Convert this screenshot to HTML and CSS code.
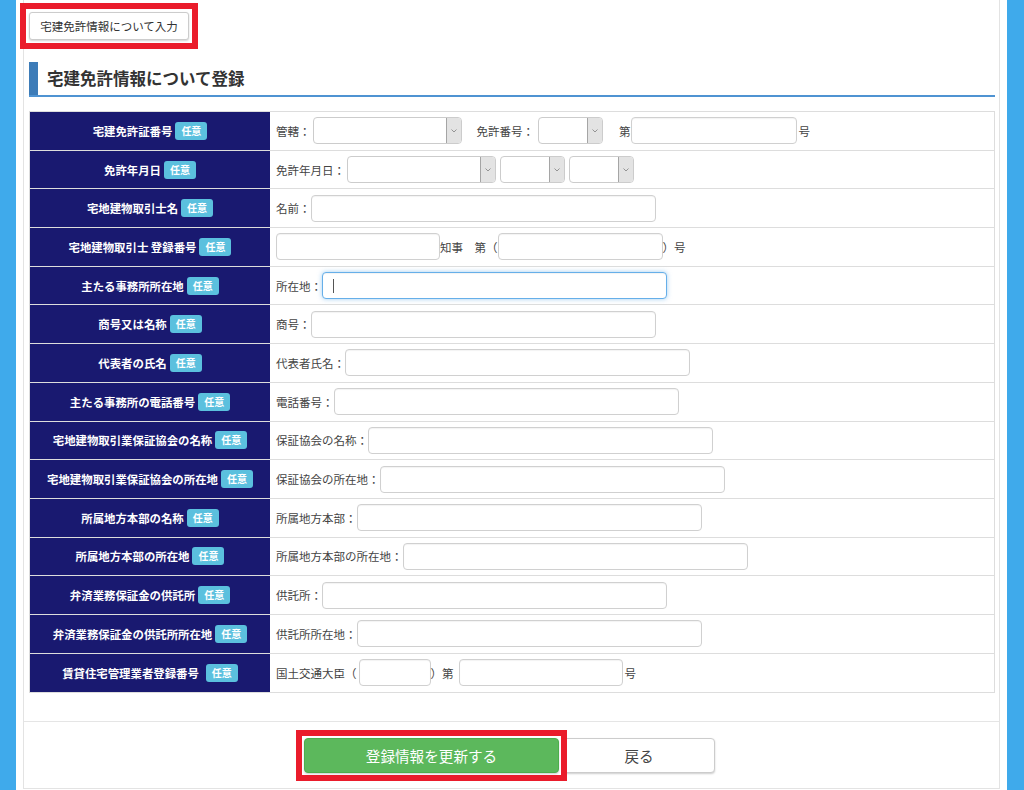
FILE: index.html
```html
<!DOCTYPE html>
<html lang="ja">
<head>
<meta charset="utf-8">
<title>宅建免許情報について登録</title>
<link rel="stylesheet" href="styles.css">
</head>
<body>
<div class="page">
  <div class="panel">
    <div class="panel-body">
      <div class="mark mark-top"><button class="top-btn">宅建免許情報について入力</button></div>
      <h2 class="heading"><span class="heading-text">宅建免許情報について登録</span></h2>

      <div class="form-table">
        <div class="row">
          <div class="label">宅建免許証番号<span class="badge">任意</span></div>
          <div class="value">管轄：<div class="select sel-lg ml2"><span class="arrow"><svg width="6" height="4" viewBox="0 0 6 4"><path d="M0.5 0.5 L3 3 L5.5 0.5" fill="none" stroke="#8a8a8a" stroke-width="0.9"/></svg></span></div><span class="ml15">免許番号：</span><div class="select sel-sm ml4"><span class="arrow"><svg width="6" height="4" viewBox="0 0 6 4"><path d="M0.5 0.5 L3 3 L5.5 0.5" fill="none" stroke="#8a8a8a" stroke-width="0.9"/></svg></span></div><span class="ml16">第</span><input class="inp w166" type="text"><span class="ml2">号</span></div>
        </div>
        <div class="row">
          <div class="label">免許年月日<span class="badge">任意</span></div>
          <div class="value">免許年月日：<div class="select sel-lg ml2"><span class="arrow"><svg width="6" height="4" viewBox="0 0 6 4"><path d="M0.5 0.5 L3 3 L5.5 0.5" fill="none" stroke="#8a8a8a" stroke-width="0.9"/></svg></span></div><div class="select sel-sm ml4"><span class="arrow"><svg width="6" height="4" viewBox="0 0 6 4"><path d="M0.5 0.5 L3 3 L5.5 0.5" fill="none" stroke="#8a8a8a" stroke-width="0.9"/></svg></span></div><div class="select sel-sm ml4"><span class="arrow"><svg width="6" height="4" viewBox="0 0 6 4"><path d="M0.5 0.5 L3 3 L5.5 0.5" fill="none" stroke="#8a8a8a" stroke-width="0.9"/></svg></span></div></div>
        </div>
        <div class="row">
          <div class="label">宅地建物取引士名<span class="badge">任意</span></div>
          <div class="value">名前：<input class="inp" type="text"></div>
        </div>
        <div class="row">
          <div class="label">宅地建物取引士 登録番号<span class="badge">任意</span></div>
          <div class="value"><input class="inp w164" type="text">知事　第（<input class="inp w165" type="text">）号</div>
        </div>
        <div class="row">
          <div class="label">主たる事務所所在地<span class="badge">任意</span></div>
          <div class="value">所在地：<div class="inp focus"><span class="caret"></span></div></div>
        </div>
        <div class="row">
          <div class="label">商号又は名称<span class="badge">任意</span></div>
          <div class="value">商号：<input class="inp" type="text"></div>
        </div>
        <div class="row">
          <div class="label">代表者の氏名<span class="badge">任意</span></div>
          <div class="value">代表者氏名：<input class="inp" type="text"></div>
        </div>
        <div class="row">
          <div class="label">主たる事務所の電話番号<span class="badge">任意</span></div>
          <div class="value">電話番号：<input class="inp" type="text"></div>
        </div>
        <div class="row">
          <div class="label">宅地建物取引業保証協会の名称<span class="badge">任意</span></div>
          <div class="value">保証協会の名称：<input class="inp" type="text"></div>
        </div>
        <div class="row">
          <div class="label">宅地建物取引業保証協会の所在地<span class="badge">任意</span></div>
          <div class="value">保証協会の所在地：<input class="inp" type="text"></div>
        </div>
        <div class="row">
          <div class="label">所属地方本部の名称<span class="badge">任意</span></div>
          <div class="value">所属地方本部：<input class="inp" type="text"></div>
        </div>
        <div class="row">
          <div class="label">所属地方本部の所在地<span class="badge">任意</span></div>
          <div class="value">所属地方本部の所在地：<input class="inp" type="text"></div>
        </div>
        <div class="row">
          <div class="label">弁済業務保証金の供託所<span class="badge">任意</span></div>
          <div class="value">供託所：<input class="inp" type="text"></div>
        </div>
        <div class="row">
          <div class="label">弁済業務保証金の供託所所在地<span class="badge">任意</span></div>
          <div class="value">供託所所在地：<input class="inp" type="text"></div>
        </div>
        <div class="row">
          <div class="label">賃貸住宅管理業者登録番号<span class="badge badge-wide">任意</span></div>
          <div class="value">国土交通大臣（<input class="inp w72 ml2" type="text">）第<input class="inp w164 ml5" type="text"><span class="ml2">号</span></div>
        </div>
      </div>
    </div>
    <div class="panel-footer">
      <div class="mark mark-submit"><button class="btn-submit">登録情報を更新する</button></div>
      <button class="btn-back">戻る</button>
    </div>
  </div>
</div>
</body>
</html>
```

FILE: styles.css
```css
html, body {
  margin: 0;
  padding: 0;
}
body {
  background: #3faaeb;
  font-family: "Noto Sans CJK JP", "Noto Sans", "Liberation Sans", sans-serif;
  color: #444;
  font-size: 11.5px;
}
.page {
  margin: 0 17px 0 16px;
  background: #fff;
  height: 790px;
  overflow: hidden;
}
.panel {
  margin: 0 7px;
  border-left: 1px solid #e3e3e3;
  border-right: 1px solid #e3e3e3;
  border-bottom: 1px solid #e3e3e3;
}
.panel-body {
  padding: 12px 4px 28px 5px;
}
.mark {
  border: 6px solid #ea1c2b;
  position: relative;
  z-index: 1;
}
.mark-top {
  width: fit-content;
  padding: 3px;
  margin: -9px;
}
.mark-submit {
  display: flex;
  padding: 2px;
  margin: -8px;
}
.top-btn {
  display: block;
  width: 160px;
  height: 28px;
  padding: 0;
  background: #fff;
  border: 1px solid #ccc;
  border-radius: 3px;
  box-shadow: 0 1px 2px rgba(0,0,0,0.18);
  font-family: inherit;
  font-size: 11.5px;
  color: #333;
  line-height: 26px;
}
.heading {
  margin: 22px 0 0 0;
  border-bottom: 2px solid #4f93d2;
  font-size: 16.5px;
  font-weight: bold;
  color: #333;
  line-height: 33px;
  height: 33px;
}
.heading-text {
  display: block;
  height: 33px;
  border-left: 9px solid #3d7cb8;
  padding-left: 9px;
}
.form-table {
  margin-top: 14px;
  border: 1px solid #ddd;
}
.row {
  display: flex;
  height: 38.7px;
  box-sizing: border-box;
  border-bottom: 1px solid #ddd;
}
.row:last-child {
  border-bottom: none;
}
.label {
  width: 240px;
  flex: none;
  background: #191970;
  color: #fff;
  font-weight: bold;
  font-size: 11.4px;
  display: flex;
  align-items: center;
  justify-content: center;
  gap: 3px;
  white-space: nowrap;
}
.badge {
  display: inline-block;
  height: 18px;
  line-height: 18px;
  padding: 0 6px;
  background: #5bc0de;
  border-radius: 3px;
  font-size: 10px;
  font-weight: bold;
  color: #fff;
}
.badge-wide {
  margin-left: 4px;
}
.value {
  flex: 1;
  display: flex;
  align-items: center;
  padding-left: 6px;
  white-space: nowrap;
}
.inp {
  box-sizing: border-box;
  width: 345px;
  height: 27px;
  margin: 0;
  padding: 0 10px;
  border: 1px solid #d0d0d0;
  border-radius: 4px;
  background: #fff;
  box-shadow: inset 0 1px 1px rgba(0,0,0,0.05);
  font-family: inherit;
  font-size: 11.5px;
  outline: none;
}
.inp.focus {
  display: flex;
  align-items: center;
  border-color: #66afe9;
  box-shadow: inset 0 1px 1px rgba(0,0,0,0.05), 0 0 5px rgba(102,175,233,0.6);
}
.caret {
  display: block;
  width: 1px;
  height: 14px;
  background: #555;
}
.w166 { width: 166px; }
.w165 { width: 165px; }
.w164 { width: 164px; }
.w72 { width: 72px; }
.ml2 { margin-left: 2px; }
.ml4 { margin-left: 4px; }
.ml5 { margin-left: 5px; }
.ml15 { margin-left: 15px; }
.ml16 { margin-left: 16px; }
.select {
  box-sizing: border-box;
  height: 27px;
  display: flex;
  justify-content: flex-end;
  border: 1px solid #ccc;
  border-radius: 4px;
  background: #fff;
}
.sel-lg { width: 149px; }
.sel-sm { width: 65px; }
.arrow {
  width: 14px;
  display: flex;
  align-items: center;
  justify-content: center;
  background: #e3e3e3;
  border-left: 1px solid #a5a5a5;
  border-radius: 0 3px 3px 0;
}
.panel-footer {
  border-top: 1px solid #e5e5e5;
  padding: 16px 4px 15px 0;
  display: flex;
  justify-content: center;
  gap: 4px;
}
.btn-submit, .btn-back {
  height: 35px;
  padding: 0;
  border-radius: 4px;
  font-family: inherit;
  font-size: 14.6px;
  box-shadow: 0 1px 2px rgba(0,0,0,0.2);
}
.btn-submit {
  width: 255px;
  background: #5cb85c;
  border: 1px solid #4cae4c;
  color: #fff;
}
.btn-back {
  width: 152px;
  background: #fff;
  border: 1px solid #ccc;
  color: #444;
}
```
